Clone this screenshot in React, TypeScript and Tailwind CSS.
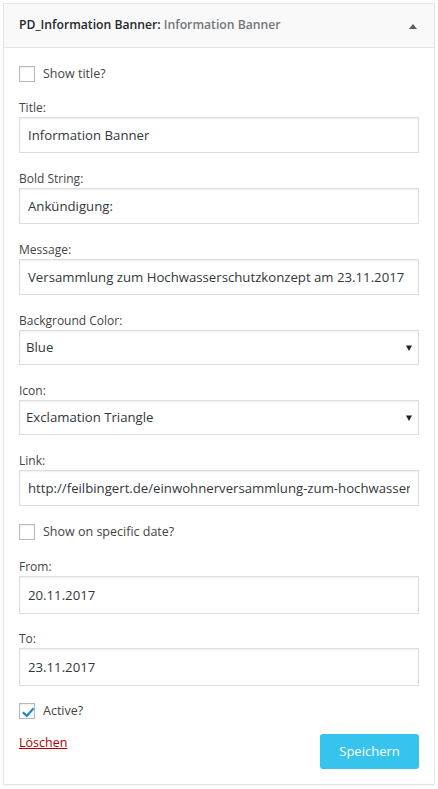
import React from "react";

const FONT = "font-['Open_Sans','Noto_Sans',sans-serif]";

function Checkbox({ checked = false, label }: { checked?: boolean; label: string }) {
  return (
    <div className="flex items-center h-[16px]">
      <span className="relative w-[16px] h-[16px] border border-[#b4b9be] bg-white shadow-[inset_0_1px_2px_rgba(0,0,0,0.07)] shrink-0">
        {checked && (
          <svg viewBox="0 0 20 20" className="absolute left-[-2px] top-[-2px] w-[20px] h-[20px]">
            <path d="M14.8 5.6 L16.4 7 L8.9 15.4 L4 11 L5.5 9.5 L8.8 12.3 Z" fill="#1e8cbe" />
          </svg>
        )}
      </span>
      <span className="ml-[8px] text-[12.5px] text-[#444]">{label}</span>
    </div>
  );
}

function Field({ label, value, h = "h-[36px]" }: { label: string; value: string; h?: string }) {
  return (
    <div>
      <div className="h-[18px] leading-[18px] text-[12px] text-[#444]">{label}</div>
      <input
        readOnly
        value={value}
        className={`block w-full ${h} border border-[#ddd] shadow-[inset_0_1px_2px_rgba(0,0,0,0.07)] bg-white px-[8px] text-[13.2px] text-[#32373c] outline-none ${FONT}`}
      />
    </div>
  );
}

function Select({ label, value }: { label: string; value: string }) {
  return (
    <div>
      <div className="h-[18px] leading-[18px] text-[12px] text-[#444]">{label}</div>
      <div className="flex items-center justify-between h-[35px] border border-[#ddd] shadow-[inset_0_1px_2px_rgba(0,0,0,0.07)] bg-white pl-[6px] pr-[5px] text-[13.2px] text-[#32373c]">
        <span>{value}</span>
        <svg viewBox="0 0 8 8" className="w-[8px] h-[8px]">
          <path d="M1 1.5 H7 L4 7 Z" fill="#222" />
        </svg>
      </div>
    </div>
  );
}

export default function App() {
  return (
    <div className={`w-[438px] h-[789px] bg-white pt-[3px] pl-[3px] ${FONT}`}>
      <div className="w-[432px] border border-[#e5e5e5] bg-white shadow-[0_1px_1px_rgba(0,0,0,0.04)]">
        {/* Widget header */}
        <div className="flex items-center justify-between h-[44px] bg-[#f9f9f9] border-b border-[#e5e5e5] pl-[15px] pr-[16px]">
          <h3 className="text-[12.2px] font-semibold text-[#23282d]">
            PD_Information Banner: <span className="text-[#72777c]">Information Banner</span>
          </h3>
          <svg viewBox="0 0 10 8" className="w-[10px] h-[8px]">
            <path d="M1 7 L5 2 L9 7 Z" fill="#555d66" />
          </svg>
        </div>

        {/* Form */}
        <div className="px-[15px] pt-[18px] pb-[15px]">
          <Checkbox label="Show title?" />
          <div className="mt-[17px]">
            <Field label="Title:" value="Information Banner" />
          </div>
          <div className="mt-[17px]">
            <Field label="Bold String:" value="Ankündigung:" />
          </div>
          <div className="mt-[17px]">
            <Field label="Message:" value="Versammlung zum Hochwasserschutzkonzept am 23.11.2017" />
          </div>
          <div className="mt-[17px]">
            <Select label="Background Color:" value="Blue" />
          </div>
          <div className="mt-[17px]">
            <Select label="Icon:" value="Exclamation Triangle" />
          </div>
          <div className="mt-[17px]">
            <Field
              label="Link:"
              value="http://feilbingert.de/einwohnerversammlung-zum-hochwasserschutzkonzept/"
            />
          </div>
          <div className="mt-[18px]">
            <Checkbox label="Show on specific date?" />
          </div>
          <div className="mt-[18px]">
            <Field label="From:" value="20.11.2017" h="h-[38px]" />
          </div>
          <div className="mt-[16px]">
            <Field label="To:" value="23.11.2017" h="h-[38px]" />
          </div>
          <div className="mt-[17px]">
            <Checkbox checked label="Active?" />
          </div>

          {/* Actions */}
          <div className="mt-[15px] flex items-start justify-between">
            <a href="#" className="text-[12.5px] leading-[18px] text-[#a00] underline">
              Löschen
            </a>
            <button className="w-[99px] h-[35px] rounded-[3px] bg-[#36c3ee] text-white text-[13px]">
              Speichern
            </button>
          </div>
        </div>
      </div>
    </div>
  );
}
